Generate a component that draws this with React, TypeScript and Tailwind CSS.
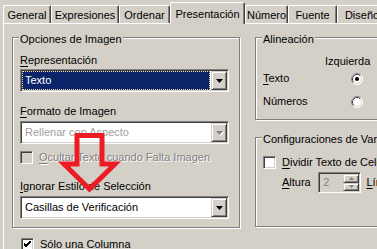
import React from 'react';

const sunken =
  'border border-t-[#808080] border-l-[#808080] border-b-white border-r-white shadow-[inset_1px_1px_0_#404040,inset_-1px_-1px_0_#d4d0c8]';
const raised =
  'border border-t-[#d4d0c8] border-l-[#d4d0c8] border-b-[#404040] border-r-[#404040] shadow-[inset_1px_1px_0_#fff,inset_-1px_-1px_0_#808080]';
const etched = 'border border-[#808080] shadow-[1px_1px_0_#fff,inset_1px_1px_0_#fff]';

function U({ children }: { children: React.ReactNode }) {
  return <span className="underline underline-offset-[2px]">{children}</span>;
}

function Arrow({ disabled }: { disabled?: boolean }) {
  return (
    <svg width="7" height="4" viewBox="0 0 7 4" className={disabled ? 'drop-shadow-[1px_1px_0_#fff]' : ''}>
      <polygon points="0,0 7,0 3.5,4" fill={disabled ? '#808080' : '#000'} />
    </svg>
  );
}

function Combo({ text, selected, disabled }: { text: string; selected?: boolean; disabled?: boolean }) {
  return (
    <div className={`w-[209px] h-[23px] flex p-[1px] bg-white ${sunken}`}>
      <div
        className={`flex-1 mr-[1px] flex items-center pl-[3px] ${
          selected ? 'bg-[#0a246a] text-white outline-1 outline-dotted outline-[#f5db95] -outline-offset-1' : ''
        } ${disabled ? 'text-[#a0a0a0]' : ''}`}
      >
        {text}
      </div>
      <div className={`w-[16px] bg-[#d4d0c8] flex items-center justify-center ${raised}`}>
        <Arrow disabled={disabled} />
      </div>
    </div>
  );
}

function Check({ checked, disabled }: { checked?: boolean; disabled?: boolean }) {
  return (
    <div className={`w-[13px] h-[13px] shrink-0 flex items-center justify-center ${sunken} ${disabled ? 'bg-[#d4d0c8]' : 'bg-white'}`}>
      {checked && (
        <svg width="7" height="7" viewBox="0 0 7 7">
          <path d="M0 3 L2 5 L7 0 M0 4 L2 6 L7 1 M0 2 L2 4 L7 -1" stroke="#000" strokeWidth="1" fill="none" />
        </svg>
      )}
    </div>
  );
}

function Radio({ checked }: { checked?: boolean }) {
  return (
    <svg width="12" height="12" viewBox="0 0 12 12" className="shrink-0">
      <circle cx="6" cy="6" r="5.5" fill="#fff" />
      <path d="M2.11 9.89 A5.5 5.5 0 0 1 9.89 2.11" stroke="#808080" fill="none" />
      <path d="M9.89 2.11 A5.5 5.5 0 0 1 2.11 9.89" stroke="#fff" fill="none" />
      <path d="M2.82 9.18 A4.5 4.5 0 0 1 9.18 2.82" stroke="#404040" fill="none" />
      <path d="M9.18 2.82 A4.5 4.5 0 0 1 2.82 9.18" stroke="#d4d0c8" fill="none" />
      {checked && <circle cx="6" cy="6" r="2" fill="#000" />}
    </svg>
  );
}

function Group({ title, className, children }: { title: string; className: string; children: React.ReactNode }) {
  return (
    <div className={`relative ${etched} ${className}`}>
      <span className="absolute left-[6px] -top-[5px] px-[1px] bg-[#d4d0c8] leading-[13px]">{title}</span>
      {children}
    </div>
  );
}

const tabs = [
  { label: 'General', w: 'w-[48px]' },
  { label: 'Expresiones', w: 'w-[68px]' },
  { label: 'Ordenar', w: 'w-[51px]' },
  { label: 'Presentación', w: 'w-[75px]', active: true },
  { label: 'Número', w: 'w-[43px]' },
  { label: 'Fuente', w: 'w-[49px]' },
  { label: 'Diseño', w: 'w-[50px]' },
];

export default function App() {
  return (
    <div className="relative w-[377px] h-[249px] overflow-hidden bg-[#d4d0c8] text-black font-['Liberation_Sans',Arial,sans-serif] text-[11px] leading-[13px] flex flex-col">
      {/* Tab strip */}
      <div className="h-[23px] flex items-end pl-[3px] shrink-0">
        {tabs.map((t) =>
          t.active ? (
            <div
              key={t.label}
              className={`${t.w} h-[22px] -mb-[1px] relative z-10 shrink-0 flex justify-center pt-[5px] bg-[#d4d0c8] border-l border-t border-white border-r border-r-[#404040] rounded-t-[2px] shadow-[inset_-1px_0_0_#808080]`}
            >
              {t.label}
            </div>
          ) : (
            <div
              key={t.label}
              className={`${t.w} h-[18px] shrink-0 flex justify-center pt-[3px] border-l border-t border-white border-r border-r-[#404040] rounded-t-[2px] shadow-[inset_-1px_0_0_#808080]`}
            >
              {t.label}
            </div>
          )
        )}
      </div>

      {/* Panel */}
      <div className="flex-1 border-t border-l border-white ml-[3px] flex gap-[15px] pl-[8px] pt-[13px]">
        {/* Left column */}
        <div className="w-[228px] shrink-0 flex flex-col">
          <Group title="Opciones de Imagen" className="h-[191px] px-[7px] pt-[16px] flex flex-col">
            <div>
              <U>R</U>epresentación
            </div>
            <div className="mt-[2px]">
              <Combo text="Texto" selected />
            </div>
            <div className="mt-[13px]">
              <U>F</U>ormato de Imagen
            </div>
            <div className="mt-[3px]">
              <Combo text="Rellenar con Aspecto" disabled />
            </div>
            <div className="mt-[7px] h-[13px] flex items-center gap-[6px]">
              <Check disabled />
              <span className="text-[#808080] [text-shadow:1px_1px_0_#fff]">
                <U>O</U>cultar Texto cuando Falta Imagen
              </span>
            </div>
            <div className="mt-[16px]">
              <U>I</U>gnorar Estilo de Selección
            </div>
            <div className="mt-[3px]">
              <Combo text="Casillas de Verificación" />
            </div>
          </Group>
          <div className="mt-[10px] pl-[9px] h-[13px] flex items-center gap-[6px]">
            <Check checked />
            <span>Sólo una Columna</span>
          </div>
        </div>

        {/* Right column */}
        <div className="w-[140px] shrink-0 flex flex-col gap-[17px]">
          <Group title="Alineación" className="h-[83px] pl-[7px] pt-[17px] flex flex-col">
            <div className="pl-[62px] h-[13px] whitespace-nowrap">Izquierda</div>
            <div className="mt-[4px] h-[13px] flex items-center">
              <span className="w-[88px]">
                <U>T</U>exto
              </span>
              <Radio checked />
            </div>
            <div className="mt-[10px] h-[13px] flex items-center">
              <span className="w-[88px]">Números</span>
              <Radio />
            </div>
          </Group>
          <Group title="Configuraciones de Variables" className="h-[90px] pl-[7px] pt-[18px] flex flex-col whitespace-nowrap">
            <div className="h-[13px] flex items-center gap-[6px]">
              <Check />
              <span>
                <U>D</U>ividir Texto de Celda
              </span>
            </div>
            <div className="mt-[3px] pl-[19px] flex items-center">
              <span className="w-[40px]">
                <U>A</U>ltura
              </span>
              <div className={`w-[47px] h-[21px] flex p-[1px] bg-[#d4d0c8] ${sunken}`}>
                <div className="flex-1 pl-[3px] flex items-center text-[#808080]">2</div>
                <div className="w-[16px] flex flex-col">
                  <div className={`flex-1 bg-[#d4d0c8] flex items-center justify-center ${raised}`}>
                    <svg width="5" height="3" viewBox="0 0 5 3">
                      <polygon points="2.5,0 5,3 0,3" fill="#808080" />
                    </svg>
                  </div>
                  <div className={`flex-1 bg-[#d4d0c8] flex items-center justify-center ${raised}`}>
                    <svg width="5" height="3" viewBox="0 0 5 3">
                      <polygon points="0,0 5,0 2.5,3" fill="#808080" />
                    </svg>
                  </div>
                </div>
              </div>
              <span className="ml-[5px]">
                <U>L</U>ínea
              </span>
            </div>
          </Group>
        </div>
      </div>

      {/* Red annotation arrow drawn over the dialog */}
      <svg className="absolute inset-0 pointer-events-none" width="377" height="249" viewBox="0 0 377 249">
        <polygon
          points="77,135.5 102,135.5 102,164 115,164 89.5,189 64,164 77,164"
          fill="none"
          stroke="#ed1c24"
          strokeWidth="5"
          strokeLinejoin="miter"
        />
      </svg>
    </div>
  );
}
